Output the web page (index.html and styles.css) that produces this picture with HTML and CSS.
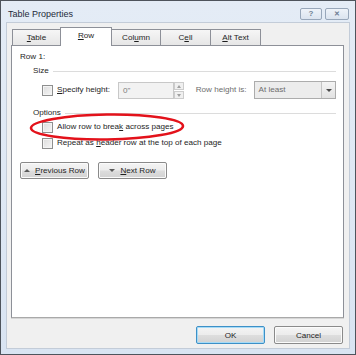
FILE: index.html
```html
<!DOCTYPE html>
<html lang="en">
<head>
    <meta charset="UTF-8">
    <title>Table Properties</title>
    <link rel="stylesheet" href="styles.css">
</head>
<body>
    <div class="window">
        <div class="titlebar">
            <span class="title">Table Properties</span>
            <div class="caption-buttons">
                <span class="caption-btn">?</span>
                <span class="caption-btn close">&#x2715;</span>
            </div>
        </div>
        <div class="client">
            <div class="tabs">
                <div class="tab tab-table"><u>T</u>able</div>
                <div class="tab tab-row active"><u>R</u>ow</div>
                <div class="tab tab-column">Col<u>u</u>mn</div>
                <div class="tab tab-cell">C<u>e</u>ll</div>
                <div class="tab tab-alt"><u>A</u>lt Text</div>
            </div>
            <div class="panel">
                <div class="row-label">Row 1:</div>

                <div class="group-head">
                    <span>Size</span>
                    <span class="rule"></span>
                </div>
                <div class="size-row">
                    <span class="checkbox"></span>
                    <span class="label"><u>S</u>pecify height:</span>
                    <span class="input disabled">0"</span>
                    <span class="spinner">
                        <span class="spin up"></span>
                        <span class="spin down"></span>
                    </span>
                    <span class="label muted">Row height is:</span>
                    <span class="select">
                        <span class="select-text">At least</span>
                        <span class="select-arrow"></span>
                    </span>
                </div>

                <div class="group-head options">
                    <span>Options</span>
                    <span class="rule"></span>
                </div>
                <div class="check-row first">
                    <span class="checkbox"></span>
                    <span class="label">Allow row to brea<u>k</u> across pages</span>
                </div>
                <div class="check-row">
                    <span class="checkbox"></span>
                    <span class="label">Repeat as <u>h</u>eader row at the top of each page</span>
                </div>

                <div class="nav-buttons">
                    <button class="button nav"><span class="tri up"></span><span class="btn-text"><u>P</u>revious Row</span></button>
                    <button class="button nav"><span class="tri down"></span><span class="btn-text"><u>N</u>ext Row</span></button>
                </div>

                <svg class="highlight" width="160" height="32" viewBox="0 0 160 32">
                    <ellipse cx="78" cy="15" rx="76" ry="12.5" fill="none" stroke="#e3121b" stroke-width="2.6" transform="rotate(-0.8 78 15)"/>
                </svg>
            </div>
            <div class="footer">
                <button class="button default">OK</button>
                <button class="button">Cancel</button>
            </div>
        </div>
    </div>
</body>
</html>
```

FILE: styles.css
```css
body {
    margin: 0;
    background: #ffffff;
    font-family: "Liberation Sans", Arial, sans-serif;
}

.window {
    width: 356px;
    height: 355px;
    box-sizing: border-box;
    border: 1px solid #4e545c;
    background: linear-gradient(180deg, #e4ecf6 0%, #d9e4f2 100%);
    padding: 0 5px 5px 5px;
    display: flex;
    flex-direction: column;
}

.titlebar {
    height: 21px;
    display: flex;
    justify-content: space-between;
    align-items: flex-start;
    padding: 7px 1px 0 2px;
    box-sizing: border-box;
}

.title {
    font-size: 9px;
    line-height: 12px;
    color: #1e2a3a;
}

.caption-buttons {
    display: flex;
    gap: 3px;
}

.caption-btn {
    width: 22px;
    height: 12px;
    box-sizing: border-box;
    border: 1px solid #98a7ba;
    border-radius: 2px;
    background: linear-gradient(180deg, #eef3f9 0%, #dbe4ef 100%);
    color: #6f7f94;
    font-size: 8px;
    font-weight: bold;
    line-height: 10px;
    text-align: center;
}

.caption-btn.close {
    width: 24px;
    font-size: 7px;
}

.client {
    flex: 1;
    display: flex;
    flex-direction: column;
    background: #f0f0f0;
    border: 1px solid #c3ccd8;
    padding: 4px 5px 0 4px;
}

/* tab strip */
.tabs {
    height: 18px;
    display: flex;
    align-items: flex-end;
    padding-left: 1px;
}

.tab {
    height: 16px;
    box-sizing: border-box;
    border: 1px solid #8d9098;
    border-bottom: none;
    margin-right: -1px;
    background: linear-gradient(180deg, #f6f6f6 0%, #e6e6e6 100%);
    font-size: 8.1px;
    line-height: 15px;
    text-align: center;
    color: #1e1e1e;
}

.tab-table { width: 49px; }
.tab-row { width: 52px; }
.tab-column { width: 50px; }
.tab-cell { width: 51px; }
.tab-alt { width: 51px; }

.tab.active {
    height: 19px;
    margin-bottom: -1px;
    background: #ffffff;
    line-height: 16px;
    position: relative;
    z-index: 1;
}

.panel {
    position: relative;
    height: 273px;
    box-sizing: border-box;
    background: #ffffff;
    border: 1px solid #8d9098;
    border-bottom-color: #a9a9a9;
    box-shadow: 0 1px 0 #d6d6d6;
    padding: 5px 7px 0 8px;
    font-size: 8.1px;
    color: #1e1e1e;
}

.row-label {
    height: 12px;
    line-height: 12px;
}

.group-head {
    height: 12px;
    line-height: 12px;
    margin-top: 2px;
    padding-left: 13px;
    display: flex;
    align-items: center;
    gap: 4px;
}

.group-head.options {
    margin-top: 8px;
}

.rule {
    flex: 1;
    height: 1px;
    background: #dcdcdc;
}

.size-row {
    height: 18px;
    margin-top: 4px;
    padding-left: 22px;
    display: flex;
    align-items: center;
}

.checkbox {
    width: 11px;
    height: 11px;
    box-sizing: border-box;
    border: 1px solid #8e8f8f;
    background: linear-gradient(135deg, #dcdcdc 0%, #f6f6f6 100%);
    box-shadow: inset 0 0 0 1px #f4f4f4;
    flex-shrink: 0;
}

.label {
    margin-left: 4px;
    white-space: nowrap;
    line-height: 12px;
}

.label.muted {
    margin-left: 12px;
    color: #6d6d6d;
}

.input {
    margin-left: 8px;
    width: 56px;
    height: 17px;
    box-sizing: border-box;
    border: 1px solid #c8c8c8;
    background: #f2f2f2;
    color: #7a7a7a;
    padding-left: 4px;
    line-height: 15px;
}

.spinner {
    width: 10px;
    height: 17px;
    display: flex;
    flex-direction: column;
    gap: 1px;
}

.spin {
    flex: 1;
    box-sizing: border-box;
    border: 1px solid #cccccc;
    background: #f0f0f0;
    position: relative;
}

.spin::after {
    content: "";
    position: absolute;
    left: 2px;
    top: 2px;
    border-left: 2px solid transparent;
    border-right: 2px solid transparent;
}

.spin.up::after {
    border-bottom: 3px solid #a0a0a0;
}

.spin.down::after {
    border-top: 3px solid #a0a0a0;
}

.select {
    margin-left: 7px;
    width: 83px;
    height: 18px;
    box-sizing: border-box;
    border: 1px solid #acacac;
    background: #ececec;
    display: flex;
}

.select-text {
    flex: 1;
    padding-left: 4px;
    line-height: 16px;
    color: #6d6d6d;
}

.select-arrow {
    width: 13px;
    border-left: 1px solid #c4c4c4;
    background: linear-gradient(180deg, #f4f4f4 0%, #e2e2e2 100%);
    position: relative;
}

.select-arrow::after {
    content: "";
    position: absolute;
    left: 4px;
    top: 7px;
    border-left: 3px solid transparent;
    border-right: 3px solid transparent;
    border-top: 3px solid #4a4a4a;
}

.check-row {
    height: 14px;
    margin-top: 2px;
    padding-left: 22px;
    display: flex;
    align-items: center;
}

.check-row.first {
    margin-top: 1px;
}

.nav-buttons {
    margin-top: 12px;
    display: flex;
    gap: 9px;
}

.button {
    width: 69px;
    height: 17px;
    box-sizing: border-box;
    border: 1px solid #8a8a8a;
    border-radius: 2px;
    background: linear-gradient(180deg, #f4f4f4 0%, #ececec 48%, #dddddd 52%, #d2d2d2 100%);
    box-shadow: inset 0 0 0 1px #fbfbfb;
    font-family: "Liberation Sans", Arial, sans-serif;
    font-size: 8.1px;
    color: #1e1e1e;
    padding: 0;
}

.button.nav {
    display: flex;
    align-items: center;
    justify-content: center;
    gap: 5px;
}

.btn-text {
    white-space: nowrap;
}

.tri {
    width: 0;
    height: 0;
    border-left: 3px solid transparent;
    border-right: 3px solid transparent;
}

.tri.up {
    border-bottom: 3px solid #5a5a5a;
}

.tri.down {
    border-top: 3px solid #5a5a5a;
}

.highlight {
    position: absolute;
    left: 17px;
    top: 66px;
    pointer-events: none;
}

.footer {
    flex: 1;
    display: flex;
    justify-content: flex-end;
    align-items: flex-start;
    gap: 9px;
    padding-top: 8px;
    padding-right: 1px;
}

.footer .button {
    height: 18px;
}

.button.default {
    border-color: #3d90c7;
    box-shadow: inset 0 0 0 1px #a6dbf7;
}
```
